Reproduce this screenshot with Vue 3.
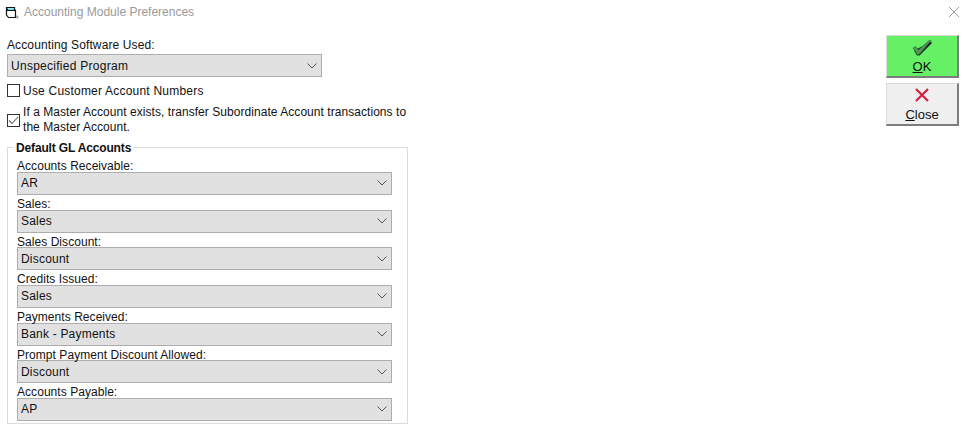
<script setup>
const glAccounts = [
  { label: "Accounts Receivable:", value: "AR" },
  { label: "Sales:", value: "Sales" },
  { label: "Sales Discount:", value: "Discount" },
  { label: "Credits Issued:", value: "Sales" },
  { label: "Payments Received:", value: "Bank - Payments" },
  { label: "Prompt Payment Discount Allowed:", value: "Discount" },
  { label: "Accounts Payable:", value: "AP" },
];
</script>

<template>
  <div class="window">
    <div class="titlebar">
      <svg class="app-icon" width="16" height="16" viewBox="0 0 16 16">
        <path d="M2.500 4.500h8l1 2h-8z" fill="#3fe0ea" />
        <path d="M2.500 3.500h8v2l1 1v7h-7l-2-2.500z M2.500 3.500l1 3h8" fill="none" stroke="#111" stroke-width="1.200" />
        <path d="M12.500 11.500v3h1v-1h1v-1h-1v-1z" fill="#777" />
      </svg>
      <span class="title">Accounting Module Preferences</span>
      <svg class="close-x" width="12" height="12" viewBox="0 0 12 12">
        <path d="M1 1l10 10M11 1L1 11" stroke="#9a9a9a" stroke-width="1" fill="none" />
      </svg>
    </div>

    <div class="body">
      <div class="form">
        <div class="label">Accounting Software Used:</div>
        <div class="combo main-combo">
          <span>Unspecified Program</span>
          <svg width="10" height="6" viewBox="0 0 10 6"><path d="M.5.500 5 5 9.500.500" fill="none" stroke="#555" /></svg>
        </div>

        <label class="check first-check">
          <span class="box"></span>
          <span>Use Customer Account Numbers</span>
        </label>
        <label class="check second-check">
          <span class="box">
            <svg width="13" height="13" viewBox="0 0 13 13"><path d="M2 6.500 5 9.500 11 3" fill="none" stroke="#666" stroke-width="1.100" /></svg>
          </span>
          <span>If a Master Account exists, transfer Subordinate Account transactions to the Master Account.</span>
        </label>

        <fieldset class="group">
          <legend>Default GL Accounts</legend>
          <div v-for="acc in glAccounts" :key="acc.label" class="gl-row">
            <div class="gl-label">{{ acc.label }}</div>
            <div class="combo">
              <span>{{ acc.value }}</span>
              <svg width="10" height="6" viewBox="0 0 10 6"><path d="M.5.500 5 5 9.500.500" fill="none" stroke="#555" /></svg>
            </div>
          </div>
        </fieldset>
      </div>

      <div class="actions">
        <button class="btn ok">
          <svg width="22" height="18" viewBox="0 0 22 18">
            <path d="M3 10.500l3 5h2.500L20.500 3.500V1.500z" fill="#1d1d28" transform="translate(0 1)" />
            <path d="M2 9l2.500-1.500 3 3.500L17.500 2 20 1.500 8 15.500H6.500z" fill="#4f9a52" stroke="#3b7a45" stroke-width=".8" />
          </svg>
          <span><u>O</u>K</span>
        </button>
        <button class="btn close">
          <svg width="16" height="16" viewBox="0 0 16 16">
            <path d="M2 2l12 12M14 2L2 14" stroke="#d4213f" stroke-width="2.200" fill="none" />
          </svg>
          <span><u>C</u>lose</span>
        </button>
      </div>
    </div>
  </div>
</template>

<style>
html,
body {
  margin: 0;
  background: #fff;
}
</style>

<style scoped>
.window {
  width: 970px;
  height: 434px;
  overflow: hidden;
  background: #fff;
  font-family: "Liberation Sans", Arial, sans-serif;
  font-size: 12px;
  color: #111;
}

.titlebar {
  display: flex;
  align-items: center;
  height: 24px;
  padding: 0 10px 0 4px;
  color: #9a9a9a;
}

.app-icon {
  margin-right: 4px;
}

.title {
  flex: 1;
}

.body {
  display: flex;
  justify-content: space-between;
  padding: 11px 11px 0 7px;
}

.form {
  width: 401px;
  margin-top: 3px;
}

.label {
  height: 14px;
  line-height: 14px;
  letter-spacing: 0.12px;
}

.combo {
  display: flex;
  align-items: center;
  justify-content: space-between;
  box-sizing: border-box;
  height: 23px;
  padding: 0 4px 0 3px;
  background: #e1e1e1;
  border: 1px solid #adadad;
  letter-spacing: 0.2px;
}

.main-combo {
  width: 315px;
  margin-top: 2px;
  letter-spacing: 0.27px;
}

.check {
  display: flex;
  align-items: center;
  gap: 3px;
  letter-spacing: 0.05px;
}

.first-check {
  margin-top: 7px;
  height: 13px;
  letter-spacing: 0.21px;
}

.second-check {
  margin-top: 8px;
  line-height: 15px;
}

.box {
  flex: none;
  box-sizing: border-box;
  width: 13px;
  height: 13px;
  border: 1px solid #333;
  background: #fff;
  display: flex;
  align-items: center;
  justify-content: center;
}

.second-check .box {
  margin-top: 1px;
}

.box svg {
  flex: none;
}

.group {
  box-sizing: border-box;
  width: 401px;
  height: 284px;
  margin: 5px 0 0;
  padding: 3.33px 15px 0 9px;
  border: 1px solid #dcdcdc;
}

.group legend {
  height: 14px;
  padding: 0 2px;
  margin-left: -3px;
  font-weight: 700;
  line-height: 16px;
  letter-spacing: -0.15px;
}

.gl-row {
  height: 37.67px;
}

.gl-label {
  height: 14.67px;
  line-height: 18px;
  letter-spacing: 0.05px;
}

.actions {
  display: flex;
  flex-direction: column;
  gap: 5px;
}

.btn {
  display: flex;
  flex-direction: column;
  align-items: center;
  justify-content: flex-start;
  box-sizing: border-box;
  width: 73px;
  height: 43px;
  padding: 3px 0 0;
  font: inherit;
  font-size: 13px;
  line-height: 15px;
  color: #111;
  border-style: solid;
  border-width: 1px 2px 2px 1px;
  border-color: #dcdcdc #7c7c7c #7c7c7c #dcdcdc;
}

.ok {
  background: #66f066;
}

.ok svg {
  margin-bottom: 2px;
}

.close {
  background: #efefef;
}

.close svg {
  margin-bottom: 4px;
}
</style>
